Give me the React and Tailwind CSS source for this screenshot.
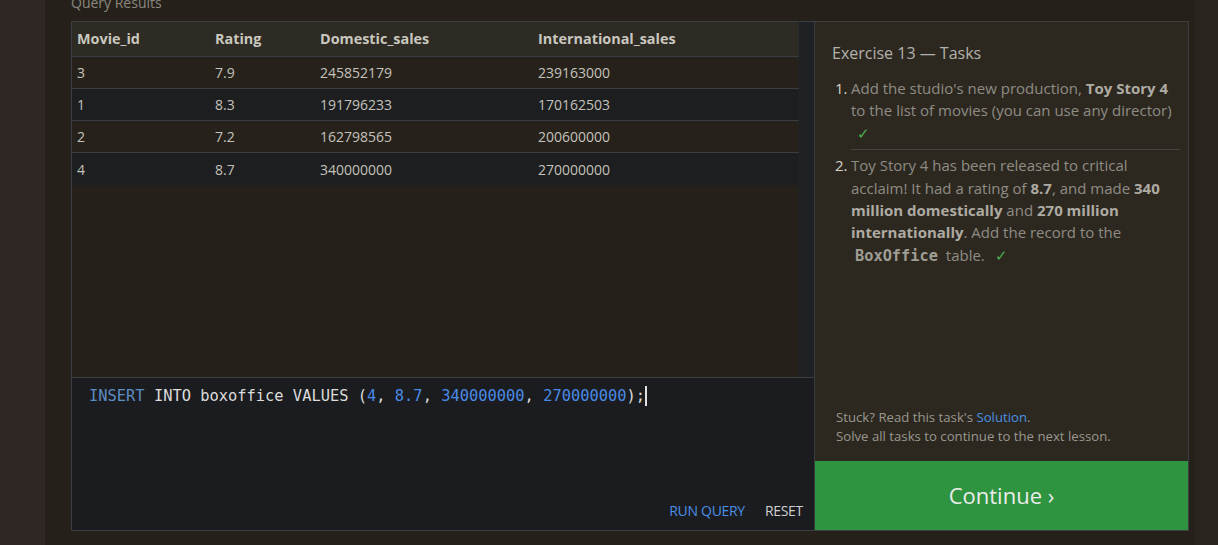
import React from 'react';

const rows = [
  ['3', '7.9', '245852179', '239163000'],
  ['1', '8.3', '191796233', '170162503'],
  ['2', '7.2', '162798565', '200600000'],
  ['4', '8.7', '340000000', '270000000'],
];

const ui = { fontFamily: '"Open Sans", "Noto Sans", sans-serif' };
const mono = { fontFamily: '"DejaVu Sans Mono", "Liberation Mono", monospace' };

function Check() {
  return <span className="text-[#4caf50] ml-[6px]">✓</span>;
}

export default function App() {
  return (
    <div className="w-full h-[545px] overflow-hidden flex bg-[#25211a]" style={ui}>
      <div className="w-[45px] shrink-0 bg-[#2e2723]" />
      <div className="flex-1 flex flex-col pl-[26px] pr-[6px]">
        <div className="-mt-[7px] h-[20px] mb-[8px] text-[14px] leading-[20px] text-[#8a877e]">Query Results</div>

        <div className="w-[1118px] h-[510px] border border-[#3b3e41] flex">
          {/* left: results + editor */}
          <div className="w-[743px] flex flex-col border-r border-[#3b3e41]">
            <div className="h-[355px] flex">
              <div className="flex-1 text-[14px]">
                <div className="grid grid-cols-[138px_105px_218px_1fr] h-[35px] items-center bg-[#2d2b23] border-b border-[#3b3e41] font-bold text-[14.4px] text-[#c9c7bf]">
                  <div className="px-[5px]">Movie_id</div>
                  <div className="px-[5px]">Rating</div>
                  <div className="px-[5px]">Domestic_sales</div>
                  <div className="px-[5px]">International_sales</div>
                </div>
                {rows.map((r, i) => (
                  <div
                    key={i}
                    className={
                      'grid grid-cols-[138px_105px_218px_1fr] h-[32px] items-center text-[#c4c2ba] ' +
                      (i % 2 === 0 ? 'bg-[#26221b] ' : 'bg-[#1c1e20] ') +
                      (i < rows.length - 1 ? 'border-b border-[#3b3e41]' : '')
                    }
                  >
                    {r.map((c, j) => (
                      <div key={j} className="px-[5px]">{c}</div>
                    ))}
                  </div>
                ))}
              </div>
              <div className="w-[15px] bg-[#1f2225]" />
            </div>

            <div className="flex-1 bg-[#1b1c1f] border-t border-[#3b3e41] flex flex-col">
              <div className="pl-[17px] pt-[8px] text-[15.4px] leading-[20px] text-[#dcdcdc] flex-1" style={mono}>
                <span className="text-[#5b8cc4]">INSERT</span> INTO boxoffice VALUES (
                <span className="text-[#4a8ae6]">4</span>, <span className="text-[#4a8ae6]">8.7</span>,{' '}
                <span className="text-[#4a8ae6]">340000000</span>, <span className="text-[#4a8ae6]">270000000</span>);
                <span className="inline-block w-[2px] h-[20px] bg-[#e0e0e0] align-top" />
              </div>
              <div className="flex justify-end items-center gap-[20px] pr-[11px] pb-[9px] text-[14px] tracking-[-0.3px]">
                <span className="text-[#4a8fe6]">RUN QUERY</span>
                <span className="text-[#cfcfcf]">RESET</span>
              </div>
            </div>
          </div>

          {/* right: tasks */}
          <div className="flex-1 flex flex-col bg-[#2c2820]">
            <div className="flex-1 px-[17px] pt-[19px]">
              <div className="text-[16px] leading-[24px] text-[#b3b1aa]">Exercise 13 — Tasks</div>
              <ol className="mt-[12px] text-[15px] leading-[22.4px] text-[#8f8c84]">
                <li className="flex pb-[5px] border-b border-[#46443e] ml-[19px] mr-[-9px]">
                  <span className="-ml-[16px] w-[16px] shrink-0 text-[#d6d4cc]">1.</span>
                  <span>
                    Add the studio's new production, <b className="text-[#aeaba3]">Toy Story 4</b> to the list of movies (you can use any director)
                    <br />
                    <Check />
                  </span>
                </li>
                <li className="flex pt-[4px] ml-[19px] mr-[-9px]">
                  <span className="-ml-[16px] w-[16px] shrink-0 text-[#d6d4cc]">2.</span>
                  <span>
                    Toy Story 4 has been released to critical acclaim! It had a rating of <b className="text-[#aeaba3]">8.7</b>, and made{' '}
                    <b className="text-[#aeaba3]">340 million domestically</b> and <b className="text-[#aeaba3]">270 million internationally</b>. Add the record to the{' '}
                    <code className="px-[4px] font-bold text-[#a09d95] text-[15.3px]" style={mono}>BoxOffice</code> table. <Check />
                  </span>
                </li>
              </ol>
            </div>
            <div className="px-[21px] pb-[15px] text-[13.2px] leading-[19px] text-[#9a978f]">
              <div>
                Stuck? Read this task's <span className="text-[#4a90e2]">Solution</span>.
              </div>
              <div>Solve all tasks to continue to the next lesson.</div>
            </div>
            <div className="h-[69px] bg-[#2e9440] flex items-center justify-center text-[22px] text-[#ececec]">
              Continue ›
            </div>
          </div>
        </div>
      </div>
      <div className="w-[23px] shrink-0 bg-[#2b2520]" />
    </div>
  );
}
